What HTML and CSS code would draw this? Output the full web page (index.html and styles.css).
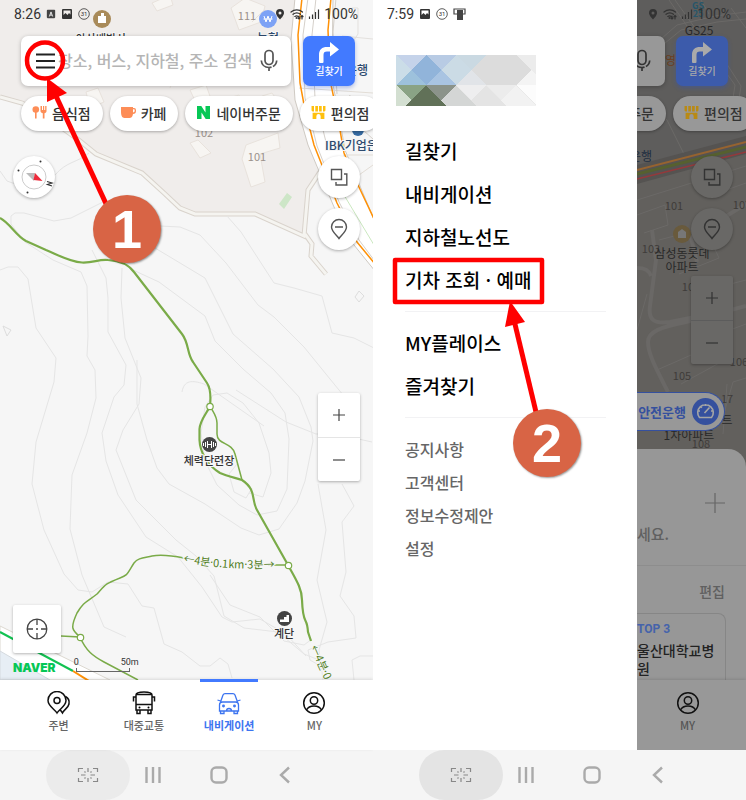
FILE: index.html
```html
<!DOCTYPE html>
<html lang="ko">
<head>
  <meta charset="UTF-8" />
  <meta name="viewport" content="width=device-width, initial-scale=1.0"/>
  <title>네이버 지도 - 기차 조회 · 예매</title>
  <link rel="stylesheet" href="styles.css">
</head>
<body>

  <!-- Shared icons -->
  <svg class="icon-defs" aria-hidden="true">
    <symbol id="i-image" viewBox="0 0 12 12"><path fill="currentColor" fill-rule="evenodd" d="M2 1h8a1 1 0 0 1 1 1v8a1 1 0 0 1-1 1H2a1 1 0 0 1-1-1V2a1 1 0 0 1 1-1zM2.500 2.500h7v4L8 5 6.500 7 4.500 5 2.500 7z"/></symbol>
    <symbol id="i-day" viewBox="0 0 12 12"><circle cx="6" cy="6" r="5.300" fill="none" stroke="currentColor" stroke-width=".8"/><text x="6" y="8.200" font-size="6" text-anchor="middle" fill="currentColor" font-family="Roboto">31</text></symbol>
    <symbol id="i-pin" viewBox="0 0 12 12"><path fill="currentColor" fill-rule="evenodd" d="M6 1a4 4 0 0 1 4 4c0 2.500-4 6.500-4 6.500S2 7.500 2 5a4 4 0 0 1 4-4zM6 3.500a1.500 1.500 0 1 0 0 3 1.500 1.500 0 0 0 0-3z"/></symbol>
    <symbol id="i-wifi" viewBox="0 0 14 12"><g fill="none" stroke="currentColor" stroke-width="1.200" stroke-linecap="round"><path d="M1 4a9 9 0 0 1 11.500 0M3 6.300a6 6 0 0 1 7.500 0M4.800 8.400a3.400 3.400 0 0 1 3.500 0M9 8v3M8 10l1 1 1-1M12 11V7.500M11 8.500l1-1 1 1"/><circle cx="6.500" cy="10" r=".4"/></g></symbol>
    <symbol id="i-signal" viewBox="0 0 12 12"><path d="M1.500 11V8.500M4.500 11V6.500M7.500 11V4M10.500 11V1.500" fill="none" stroke="currentColor" stroke-width="1.200"/></symbol>
    <symbol id="i-mic" viewBox="0 0 18 24"><g fill="none" stroke="currentColor" stroke-width="1.700"><rect x="5" y="1.500" width="8" height="14" rx="4"/><path d="M1.300 11.500c.3 4 3.200 7 7.700 7s7.400-3 7.700-7M9 18.500V22" stroke-dasharray="14 1.500 20"/></g></symbol>
    <symbol id="i-turn" viewBox="0 0 24 22"><path fill="currentColor" d="M2 20v-7C2 7.500 5 5 10 5h3V0l9 7.500L13 14.500V9.500h-3C7.500 9.500 6.500 10.500 6.500 13v7a1 1 0 0 1-1 1H3a1 1 0 0 1-1-1z"/></symbol>
    <symbol id="i-store" viewBox="0 0 14 14"><path fill="currentColor" d="M.5 1h2.300v5H1.500a1 1 0 0 1-1-1zM4 1h2.500v5H4zM7.500 1H10v5H7.500zM11.200 1h2.300v4a1 1 0 0 1-1 1h-1.300zM1.500 7.200h11V13H9v-2.500a2 2 0 0 0-4 0V13H1.500z"/></symbol>
    <symbol id="i-layers" viewBox="0 0 20 20"><g fill="none" stroke="currentColor" stroke-width="1.400"><path d="M2.500 2.500h10v10h-10zM15 7h2.800v11H7v-3"/></g></symbol>
    <symbol id="i-place" viewBox="0 0 20 22"><g fill="none" stroke="currentColor" stroke-width="1.400"><path d="M10 20.500C8 17.500 2.500 13.500 2.500 9a7.500 7.500 0 0 1 15 0c0 4.500-5.500 8.500-7.500 11.500zM6 9h8"/></g></symbol>
    <symbol id="i-plus" viewBox="0 0 14 14"><path d="M7 1v12M1 7h12" fill="none" stroke="currentColor" stroke-width="1.200"/></symbol>
    <symbol id="i-minus" viewBox="0 0 14 14"><path d="M1 7h12" fill="none" stroke="currentColor" stroke-width="1.200"/></symbol>
    <symbol id="i-my" viewBox="0 0 24 24"><g fill="none" stroke="currentColor" stroke-width="1.500"><circle cx="12" cy="12" r="10.300"/><circle cx="12" cy="9.500" r="3.700"/><path d="M4.500 19c1.500-3 4.500-4 7.500-4s6 1 7.500 4"/></g></symbol>
    <symbol id="i-capture" viewBox="0 0 22 16"><g fill="none" stroke="currentColor" stroke-width="1.200"><path d="M1.500 5V1.500H6M1.500 11v3.500H6M16 1.500h4.500V5M16 14.500h4.500V11M11 1v4M11 11v4M4 8h4.500M13.500 8H18M7.500 4.500l1 1M14.500 4.500l-1 1M7.500 11.500l1-1M14.500 11.500l-1-1"/></g></symbol>
    <symbol id="i-recent" viewBox="0 0 18 18"><path d="M2.500 1v16M9 1v16M15.500 1v16" fill="none" stroke="currentColor" stroke-width="2.400"/></symbol>
    <symbol id="i-home" viewBox="0 0 18 18"><rect x="1.500" y="1.500" width="15" height="15" rx="4.500" fill="none" stroke="currentColor" stroke-width="2.400"/></symbol>
    <symbol id="i-back" viewBox="0 0 18 18"><path d="M13 1.500L5 9l8 7.500" fill="none" stroke="currentColor" stroke-width="2.400"/></symbol>
  </svg>

  <main class="phones">

    <!-- Phone 1: map -->
    <section class="phone">
      <div class="screen">
        <svg class="map" viewBox="0 0 373 680" preserveAspectRatio="xMinYMin slice">
          <rect width="373" height="680" fill="#f6f6f6"/>
          <path fill="#f0edeb" d="M0 0H302L298 40 301 100 309 140 318 172 308 190 305 234 258 214H195L180 208 165 195 142 173 95 155 72 135 40 112 22 103 0 98z"/>
          <g fill="#f7f5f2" stroke="#e8e2dc">
            <path d="M152 3l18-8 3 10-16 6zM231 8l14-10 20 8-4 16-22 8zM86 92l12-4 6 14-14 6zM190 90l16-5 5 14-14 6zM222 100l17-5 10 24-16 6zM262 96l10-3 12 17-10 5zM190 143l8-3 13 13-11 5zM246 145l32-12 2 15-20 6 5 28-14 5-9-28z"/>
            <path fill="none" d="M252 22l12-12 20 8M170 88c6-18 10-20 22-14M210 84l6-18"/>
          </g>
          <path d="M279 204l8-11 5 4-8 12z" fill="#cde6c7"/>
          <!-- small roads -->
          <path d="M0 97l22 6 18 9 40 29 16 13 46 19 22 20 16 15 15 6h60l49 22 4-46 12-18M305 234l7 10-1 12 15 18" fill="none" stroke="#d9d3cc" stroke-width="5"/>
          <path d="M0 97l22 6 18 9 40 29 16 13 46 19 22 20 16 15 15 6h60l49 22 4-46 12-18M305 234l7 10-1 12 15 18" fill="none" stroke="#f5f4f0" stroke-width="3"/>
          <path d="M0 171l7 10 14 5M55 175c12-14 22-12 34-22" fill="none" stroke="#e3e3e3"/>
          <!-- main road -->
          <path fill="#fff" stroke="#cfcac3" d="M295-2L291 40l4 60 13 45 26 62 20 38 21 26V222L345 150l-7-40-6-30 1-82z"/>
          <path d="M373 155h-30M373 165l-14 10M299 88l74 5" stroke="#e2ddd6" fill="none"/>
          <path d="M308-2l-5 37 2 63 12 48 22 56 20 38 15 20M316-2l-4 37 3 63 11 44M336-2l-3 34 4 62M350 95l-6 18 29 26" fill="none" stroke="#d5d0ca"/>
          <path d="M302-2l-4 37 2 48 5 27 9 35 23 58 20 39 18 22M331-2l-3 32 2 50 7 33 7 40 14 32 18 38" fill="none" stroke="#ff9106" stroke-width="1.500"/>
          <path d="M344 195l30 50" stroke="#cbe8c0" fill="none"/>
          <path d="M352 8l6 0v26l-8 12M342 36l31 3" fill="none" stroke="#e3e0dd"/>
          <!-- contour lines -->
          <g fill="none" stroke="#e5e5e5">
            <path d="M103 202l-32 16-17 3-30-8h-9l-4 3v8l14 18 28 18 28 12 6 14 1 50-1 20 8 14 1 28-9 35-15 42-2 54 12 46 22 52 22 10"/>
            <path d="M0 270l8-3h10l10 12 8 49 20 30-2 24-18 60-4 42 12 46 20 44 14 16 14 2 16-10 20 2 14 22 12 2 10 36 18 8 18 14h10l10-8 8 6 4 14"/>
            <path d="M92 250l4 8 10 20 2 20v34l18 33-2 20-10 12-12 36 4 28 12 34 28 42 32 20 24 30 20 30 10 5 28-3 26 15 20 22"/>
            <path d="M122 268l-1 30 4 40 16 40-2 26-16 26-7 20 20 50 40 40 20 16 18 20 10 40 20 12 34 4 26 22 20 8"/>
            <path d="M133 270l26 12 46 34 10 25 28 28 28 24 14 20 4 26-2 50-10 22-20 4-18-10-22-20-12-24-4-28 4-26 8-12 14-2 16 10 16 20 10 30 2 20-8 24-14-4"/>
            <path d="M160 226l20 1 20 8 26 28 32 42 16 12 30 30 26 32 18 22 4 40"/>
            <path d="M155 248l50 30 28 56 40 35 26 28 12 30 2 14-8 40-8 22-18 26-20 6-18-7-36-24-36-20-12-16-10-28-10-36V360"/>
            <path d="M227 216l14 16 33 51 20 5 28 8 10 37 22 5 20 10"/>
            <path d="M182 392c2-12 10-12 22-8l60 42M236 390l50 32 30 12h20l36 8M237 464l-8 10 5 18 12 6 6-10"/>
            <path d="M318 484l8 46-9 50 10 42-8 28 4 30M342 484l12 22-12 16 4 50-6 24 14 20 2 22-28 4-20 8 2 10 7 4M210 575l20 30 30 12 24 24 20 4 8-6M354 680l-2-20 8-4h14"/>
          </g>
          <path d="M355 297l4-6 5 5-5 6zM3 326l8 4-4 6z" fill="none" stroke="#ddd"/>
          <!-- road bottom left -->
          <path d="M0 626l110 54H0z" fill="#fff" stroke="#dcd8d0"/>
          <path d="M0 651l50 29H0z" fill="#e7eef5" stroke="#d5dadf"/>
          <path d="M0 632l73 39" stroke="#12c252" stroke-width="2"/>
          <path d="M73 671l16 10" stroke="#ff9106" stroke-width="2"/>
          <!-- trails -->
          <g fill="none" stroke="#7aab48" stroke-linejoin="round">
            <path stroke-width="2.200" d="M0 218C10 223 16 236 26 241L46 250C58 255 70 262 82 262.500S98 259 108 260C122 261 129 265 134 272L182 334C189 343 187 354 193 362L207 383C211 389 211 396 210 406 207 413 200 420 199.500 429V440C200 452 207 465 220 473 227 476 236 478 242 480 257 490 251 500 257 510L288 565C295 578 302 588 302 600 303 627 307 615 308 632L311 641"/>
            <path stroke-width="1.500" d="M210 406C213 412 217 416 217 423V434C217 445 232 442 235 454L242 480M184 558C174 556 162 554 152 556 143 558 138 558 134 563 127 574 128 575 120 578 105 584 106 584 97 594 87 602 84 601 77 613 70 628 72 630 80 637 86 651 93 656 104 662L138 680M61 636l19 1M268 565h20"/>
          </g>
          <g fill="#fff" stroke="#7aab48" stroke-width="1.200">
            <circle cx="210" cy="406.500" r="3.200"/><circle cx="288.500" cy="565.500" r="3.200"/><circle cx="80.500" cy="637.500" r="3.200"/>
          </g>
          <path id="trailLabel" d="M183 562C205 566 225 570 280 568" fill="none"/>
          <text class="trail-text"><textPath href="#trailLabel">←4분·0.1km·3분→</textPath></text>
          <text class="trail-text" transform="translate(310 647) rotate(66)">←4분·0.1</text>
          <!-- places -->
          <circle cx="209.500" cy="444.500" r="7.500" fill="#444"/>
          <path d="M207.500 441v7M211.500 441v7M207.500 444.500h4M205.500 442v5M213.500 442v5M203.500 443v3M215.500 443v3" stroke="#fff" fill="none"/>
          <text class="map-label" x="209" y="465">체력단련장</text>
          <circle cx="284.500" cy="618.500" r="7.500" fill="#444"/>
          <path d="M280 622h9v-7h-2.500v2H284v2.500h-4z" fill="#fff"/>
          <text class="map-label" x="284" y="638">계단</text>
          <circle cx="102" cy="19" r="9" fill="#a98b5a"/>
          <path d="M98 23v-7h3v-3h3v3h2v7z" fill="#fff"/>
          <text class="map-label" x="101" y="43">아산배방사</text>
          <circle cx="268" cy="19" r="9" fill="#7da2f5"/>
          <path d="M264 16l2 6 2-6 2 6 2-6M263.500 19h9" stroke="#fff" fill="none"/>
          <text class="map-label bank" x="268" y="43">농협</text>
          <text class="map-label bank" x="357" y="75">은행</text>
          <circle cx="358" cy="130" r="6" fill="#376ca3"/>
          <text class="map-label bank start" x="325" y="150">IBK기업은</text>
          <text class="map-num" x="247" y="20">111</text>
          <text class="map-num" x="204" y="137">102</text>
          <text class="map-num" x="257" y="161">101</text>
        </svg>

        <div class="status">
          <span class="clock">8:26</span>
          <svg width="10" height="10" viewBox="0 0 12 12"><rect x="1" y="1" width="10" height="10" rx="1" fill="#444"/><path d="M4 9l2-5.500L8 9M4.800 7.300h2.400" stroke="#fff" fill="none"/></svg>
          <svg width="12" height="12"><use href="#i-image"/></svg>
          <svg width="12" height="12"><use href="#i-day"/></svg>
          <span class="status-right">
            <svg width="12" height="12"><use href="#i-pin"/></svg>
            <svg width="14" height="12"><use href="#i-wifi"/></svg>
            <svg width="12" height="12"><use href="#i-signal"/></svg>
            <span>100%</span>
          </span>
        </div>

        <div class="top-row">
          <form class="search">
            <button type="button" class="plain" aria-label="메뉴">
              <svg width="20" height="16" viewBox="0 0 20 16"><path d="M0 1.500h19M0 8h19M0 14.500h19" stroke="#222" stroke-width="1.800"/></svg>
            </button>
            <input type="text" class="search-input" placeholder="장소, 버스, 지하철, 주소 검색" aria-label="검색">
            <button type="button" class="plain mic" aria-label="음성 검색"><svg width="18" height="24"><use href="#i-mic"/></svg></button>
          </form>
          <button class="route"><svg width="24" height="22"><use href="#i-turn"/></svg>길찾기</button>
        </div>

        <div class="chips">
          <button class="chip"><svg width="15" height="15" viewBox="0 0 15 15"><g fill="#fd8d57"><circle cx="3.800" cy="4.500" r="3.300"/><path d="M3 6h1.600v7.500H3zM8.500 1H10v4h1V1h1.200v4h1V1h1.300v5c0 1.500-1 2-2 2.300v5.200h-1.700V8.300c-1-.3-2.300-.8-2.300-2.300z"/></g></svg>음식점</button>
          <button class="chip"><svg width="15" height="15" viewBox="0 0 15 15"><path fill="#fd8d57" fill-rule="evenodd" d="M0 2h12v1h1a2 2 0 0 1 2 2v1a3 3 0 0 1-3 3c-.5 3-2 4-3.500 4h-5C1 13 0 10 0 7zM12 4.300v3.200c1 0 1.700-.7 1.700-1.700V5a.7.7 0 0 0-.7-.7z"/></svg>카페</button>
          <button class="chip"><svg width="15" height="15" viewBox="0 0 15 15"><path fill="#06c755" d="M1 1h4.300l4.200 6.500V1H14v13H9.700L5.500 7.500V14H1z"/></svg>네이버주문</button>
          <button class="chip store"><svg width="15" height="15"><use href="#i-store"/></svg>편의점</button>
        </div>

        <div class="map-tools">
          <button class="compass" aria-label="나침반">
            <svg width="42" height="42" viewBox="0 0 42 42">
              <circle cx="21" cy="21" r="12" fill="none" stroke="#ccc"/>
              <path d="M13 17l9 0-1 8z" fill="#bbb"/><path d="M22 17l7.500 8-9-1z" fill="#ee2b3b"/>
              <g fill="#333"><circle cx="27.500" cy="5.500" r="1"/><circle cx="5.500" cy="14.500" r="1"/><circle cx="14.500" cy="36.500" r="1"/></g>
              <path d="M34 25.500l5 1.500-4.500 1.500 4.500 1.500" stroke="#333" stroke-width="1.200" fill="none"/>
            </svg>
          </button>
          <div class="side">
            <button class="round" aria-label="지도 유형"><svg width="20" height="20"><use href="#i-layers"/></svg></button>
            <button class="round" aria-label="장소"><svg width="20" height="22"><use href="#i-place"/></svg></button>
            <div class="zoom">
              <button aria-label="확대"><svg width="14" height="14"><use href="#i-plus"/></svg></button>
              <button aria-label="축소"><svg width="14" height="14"><use href="#i-minus"/></svg></button>
            </div>
          </div>
        </div>

        <div class="map-bottom">
          <button class="locate" aria-label="현재 위치">
            <svg width="22" height="22" viewBox="0 0 22 22"><g fill="none" stroke="#444" stroke-width="1.300"><circle cx="11" cy="11" r="9.800"/><path d="M11 1v6M11 15v6M1 11h6M15 11h6"/></g><circle cx="11" cy="11" r="1" fill="#444"/></svg>
          </button>
          <div class="legend">
            <span class="brand">NAVER</span>
            <div class="scale"><span>0</span><span>50m</span></div>
          </div>
        </div>
      </div>

      <nav class="tabs">
        <a href="#" class="tab"><svg width="24" height="24" viewBox="0 0 24 24"><g fill="none" stroke="#111" stroke-width="1.500"><path d="M10 22C8 18.500 1 15 1 9.500a9 9 0 0 1 18 0C19 15 12 18.500 10 22z"/><circle cx="10" cy="9.500" r="3"/><path d="M18.500 5.500c3 1.500 4 4.500 3.500 7.500-.8 4-5 5.500-6.500 9l-2.500-3.500"/></g></svg>주변</a>
        <a href="#" class="tab"><svg width="24" height="24" viewBox="0 0 24 24"><g fill="none" stroke="#111" stroke-width="1.500"><path d="M4 19V4c0-2 3-3 8-3s8 1 8 3v15zM4 3.500h16M4 13.500h16M4 6H1.500v4.500M20 6h2.500v4.500M5 19v3.500h3V19M16 19v3.500h3V19"/></g><circle cx="7.500" cy="16.500" r="1"/><circle cx="16.500" cy="16.500" r="1"/></svg>대중교통</a>
        <a href="#" class="tab active"><svg width="24" height="24" viewBox="0 0 24 24"><g fill="none" stroke="#3c74f0" stroke-width="1.300"><path d="M3.500 11L6 4c.5-1 1-1.300 2-1.300h8c1 0 1.500.3 2 1.300l2.500 7M2.500 20v-6c0-2 1-3 3-3h13c2 0 3 1 3 3v6zM3.500 10L.5 9M20.500 10l3-1M3.500 20v2.500h3.500V20M17 20v2.500h3.500V20M9.500 20c0-2 .5-2.500 2.500-2.500s2.500.5 2.500 2.500"/><circle cx="6.500" cy="15" r=".8"/><circle cx="17.500" cy="15" r=".8"/></g></svg>내비게이션</a>
        <a href="#" class="tab"><svg class="my" width="24" height="24"><use href="#i-my"/></svg>MY</a>
      </nav>

      <div class="sysnav">
        <button class="pill" aria-label="캡처"><svg width="22" height="16"><use href="#i-capture"/></svg></button>
        <div class="sysnav-keys">
          <button aria-label="최근 앱"><svg width="18" height="18"><use href="#i-recent"/></svg></button>
          <button aria-label="홈"><svg width="18" height="18"><use href="#i-home"/></svg></button>
          <button aria-label="뒤로"><svg width="18" height="18"><use href="#i-back"/></svg></button>
        </div>
      </div>

      <!-- Step 1 -->
      <svg class="marks" width="373" height="680">
        <circle cx="45" cy="60.500" r="18" fill="none" stroke="#f00" stroke-width="4.500"/>
        <path d="M56 96l52 112" stroke="#f00" stroke-width="5"/>
        <path d="M47 78l20 15-20 9z" fill="#f00"/>
      </svg>
      <span class="step step-one">1</span>
    </section>

    <!-- Phone 2: open menu -->
    <section class="phone">
      <div class="screen split">
        <aside class="drawer">
          <svg class="profile" width="140" height="51" viewBox="0 0 140 51" shape-rendering="crispEdges">
            <rect width="140" height="51" fill="#e9e9e9"/>
            <path d="M0 0h30L15 15z" fill="#c5d3ea"/><path d="M0 0l15 15L0 30z" fill="#cbdde8"/>
            <path d="M15 15l15 15H0z" fill="#9dc1dc"/>
            <path d="M15 15L30 0l15 15-15 15z" fill="#91b4da"/><path d="M30 30l15-15 15 15z" fill="#a9c4e2"/>
            <path d="M30 0h30L45 15z" fill="#b8cbe4"/><path d="M60 0l15 15-15 15-15-15z" fill="#cbdbe5"/>
            <path d="M60 0h30L75 15z" fill="#cad9e2"/><path d="M60 30l15-15 15 15z" fill="#e1e4e8"/>
            <path d="M90 0h30l15 15-15 15H90L75 15z" fill="#dcdcdc"/><path d="M120 0h20v20z" fill="#ececec"/><path d="M120 30l15-15 5 5v10z" fill="#f4f4f4"/>
            <path d="M0 30h30L15 45z" fill="#8aa385"/><path d="M0 30l15 15-6 6H0z" fill="#d3dfd1"/>
            <path d="M30 30h30L45 46z" fill="#8b938a"/><path d="M30 30l20 21H10z" fill="#617158"/>
            <path d="M60 30l20 21H50l-5-6z" fill="#d4d6d5"/><path d="M60 30h30L75 45z" fill="#eeeeef"/>
            <path d="M90 30l20 21H80l-5-6z" fill="#e4e4e4"/><path d="M90 30h30l-15 15z" fill="#ececec"/><path d="M120 30l20 21h-30l-5-6z" fill="#f2f2f2"/><path d="M120 30h20v20z" fill="#fcfcfc"/>
          </svg>
          <ul class="menu">
            <li><a href="#">길찾기</a></li>
            <li><a href="#">내비게이션</a></li>
            <li><a href="#">지하철노선도</a></li>
            <li><a href="#">기차 조회 · 예매</a></li>
          </ul>
          <ul class="menu">
            <li><a href="#">MY플레이스</a></li>
            <li><a href="#">즐겨찾기</a></li>
          </ul>
          <ul class="menu small">
            <li><a href="#">공지사항</a></li>
            <li><a href="#">고객센터</a></li>
            <li><a href="#">정보수정제안</a></li>
            <li><a href="#">설정</a></li>
          </ul>
        </aside>

        <div class="behind">
          <svg class="map" viewBox="0 0 109 680" preserveAspectRatio="xMinYMin slice">
            <rect width="109" height="680" fill="#62605d"/>
            <path d="M0 0h109v144L0 176z" fill="#5e5d5c"/>
            <g fill="none" stroke="#6b6967">
              <path d="M0 60l40-35 38-9 31-4M0 66l44-36 36-8 29-3M38 0l20 28M32 0l18 26M80 60l18 25-6 40M86 58l18 28-6 40M64 0l8 14M0 96l30 24 20 40M94 8l15 20"/>
              <path stroke-width="4" stroke="#6a6866" d="M0 268c8 0 12 2 14 8M15 230l4 30-6 46c-2 14 4 18 20 16l40-8M109 306l-60 16c-26 5-38 10-38 20 0 12 8 26 20 50M60 262l-6-24 55-34"/>
              <path d="M0 200l109-34M0 215l28-10 3 20-24 8M75 195l34-12M22 240l46-12 14 30-40 16M20 370l50-22 14 14-40 22M66 340l43-16M84 424l12-42 13-4M90 384l-4 50M0 330l10-36M70 290l39-10"/>
            </g>
            <path d="M0 165l109-29v18L0 184z" fill="#555351"/>
            <path d="M0 170l109-28" stroke="#966330" stroke-width="2"/>
            <path d="M0 174l109-27" stroke="#56602f" stroke-width="3"/>
            <path d="M0 179l109-27" stroke="#94393b" stroke-width="1.500"/>
            <g class="dim-labels">
              <text x="61" y="9" class="gs">GS</text><text x="61" y="17" class="gs">25</text>
              <text x="62" y="35">GS25</text>
              <text x="28" y="65" class="orange">미영</text>
              <text x="4" y="161" class="blue">은행</text>
              <text x="37" y="210" class="num">101</text><text x="105" y="209" class="num">107</text>
              <text x="14" y="253" class="num">103</text><text x="54" y="291" class="num">102</text>
              <text x="102" y="366" class="num">106</text><text x="45" y="380" class="num">105</text>
              <text x="90" y="403" class="num">17</text><text x="64" y="448" class="num">108</text>
              <circle cx="45" cy="234" r="9" fill="#695a3c"/>
              <path d="M41 238v-6l4-3 4 3v6z" fill="#777"/>
              <text x="45" y="258">삼성동롯데</text><text x="45" y="272">아파트</text>
              <text x="52" y="440">1차아파트</text><text x="90" y="425">트</text>
            </g>
          </svg>

          <div class="top-row">
            <div class="search"><svg width="18" height="24"><use href="#i-mic"/></svg></div>
            <button class="route"><svg width="24" height="22"><use href="#i-turn"/></svg>길찾기</button>
          </div>
          <div class="chips">
            <button class="chip cut">주문</button>
            <button class="chip store"><svg width="15" height="15"><use href="#i-store"/></svg>편의점</button>
          </div>
          <div class="side">
            <button class="round" aria-label="지도 유형"><svg width="20" height="20"><use href="#i-layers"/></svg></button>
            <button class="round" aria-label="장소"><svg width="20" height="22"><use href="#i-place"/></svg></button>
            <div class="zoom">
              <button aria-label="확대"><svg width="14" height="14"><use href="#i-plus"/></svg></button>
              <button aria-label="축소"><svg width="14" height="14"><use href="#i-minus"/></svg></button>
            </div>
          </div>
          <button class="safe-drive">안전운행
            <svg width="27" height="27" viewBox="0 0 27 27"><circle cx="13.500" cy="13.500" r="13.500" fill="#35509e"/><g fill="none" stroke="#a5a5a5" stroke-width="1.600"><path d="M7.500 19.500a7.800 7.800 0 1 1 12 0zM12.500 15l5-5.500M13.500 6v2M6 13h2M19 13h2M8.500 8.500l1.300 1.300"/></g></svg>
          </button>
          <div class="sheet">
            <div class="sheet-head">
              <button class="plain" aria-label="추가"><svg width="20" height="20" viewBox="0 0 20 20"><path d="M10 0v20M0 10h20" stroke="#666" stroke-width="1.200"/></svg></button>
              <p>세요.</p>
            </div>
            <a href="#" class="edit">편집</a>
            <div class="card"><b>TOP 3</b><p>울산대학교병원</p></div>
          </div>
          <nav class="tabs"><a href="#" class="tab"><svg class="my" width="24" height="24"><use href="#i-my"/></svg>MY</a></nav>
        </div>

        <div class="status">
          <span class="clock">7:59</span>
          <svg width="12" height="12"><use href="#i-image"/></svg>
          <svg width="12" height="12"><use href="#i-day"/></svg>
          <svg width="13" height="12" viewBox="0 0 13 12"><path d="M1 1h11v5H1z" fill="none" stroke="#444" stroke-width="1.200"/><path d="M4 2h6v10H4z" fill="#444"/></svg>
          <span class="status-right">
            <svg width="12" height="12"><use href="#i-pin"/></svg>
            <svg width="14" height="12"><use href="#i-wifi"/></svg>
            <svg width="12" height="12"><use href="#i-signal"/></svg>
            <span>100%</span>
          </span>
        </div>
      </div>

      <div class="sysnav">
        <button class="pill dark" aria-label="캡처"><svg width="22" height="16"><use href="#i-capture"/></svg></button>
        <div class="sysnav-keys">
          <button aria-label="최근 앱"><svg width="18" height="18"><use href="#i-recent"/></svg></button>
          <button aria-label="홈"><svg width="18" height="18"><use href="#i-home"/></svg></button>
          <button aria-label="뒤로"><svg width="18" height="18"><use href="#i-back"/></svg></button>
        </div>
      </div>

      <!-- Step 2 -->
      <svg class="marks" width="373" height="680">
        <rect x="22" y="260" width="147" height="42" fill="none" stroke="#f00" stroke-width="4.500" stroke-linejoin="round"/>
        <path d="M141 320l22 92" stroke="#f00" stroke-width="5"/>
        <path d="M137 301l15 21-20 5z" fill="#f00"/>
      </svg>
      <span class="step step-two">2</span>
    </section>

  </main>
</body>
</html>
```
FILE: styles.css
```css
* {
  box-sizing: border-box;
}
body {
  margin: 0;
  font-family: "Noto Sans CJK KR", sans-serif;
  color: #222;
  background: #fff;
}
button {
  padding: 0;
  border: none;
  background: none;
  font-family: inherit;
  color: inherit;
  cursor: pointer;
}
a {
  color: inherit;
  text-decoration: none;
}
p {
  margin: 0;
}
svg {
  display: block;
  flex-shrink: 0;
}
.icon-defs {
  position: absolute;
  width: 0;
  height: 0;
}

/* phones */
.phones {
  display: grid;
  grid-template-columns: 1fr 1fr;
  min-height: 100vh;
}
.phone {
  position: relative;
  display: flex;
  flex-direction: column;
  min-width: 0;
  overflow: hidden;
}
.screen {
  position: relative;
  z-index: 0;
  flex: 1;
  display: flex;
  flex-direction: column;
  padding-top: 36px;
}
.map {
  position: absolute;
  top: 0;
  left: 0;
  z-index: -1;
  width: 100%;
}
.map-label {
  font-size: 11px;
  font-weight: 500;
  text-anchor: middle;
  fill: #333;
  stroke: #f6f6f6;
  stroke-width: 2px;
  paint-order: stroke;
}
.map-label.bank {
  font-size: 12px;
  fill: #2d4a6e;
}
.map-label.start {
  text-anchor: start;
}
.map-num {
  font-size: 11px;
  text-anchor: middle;
  fill: #9b918b;
}
.trail-text {
  font-size: 11px;
  fill: #4f7d22;
  stroke: #f6f6f6;
  stroke-width: 2px;
  paint-order: stroke;
}

/* status bar */
.status {
  position: absolute;
  top: 0;
  left: 0;
  right: 0;
  height: 28px;
  display: flex;
  align-items: center;
  gap: 5px;
  padding: 0 15px 0 14px;
  font-family: Roboto, sans-serif;
  font-size: 14px;
  color: #333;
}
.status-right {
  margin-left: auto;
  display: flex;
  align-items: center;
  gap: 4px;
}

/* search and categories */
.top-row {
  display: flex;
  gap: 12px;
  padding: 0 18px 0 21px;
}
.search {
  flex: 1;
  min-width: 0;
  height: 50px;
  display: flex;
  align-items: center;
  padding: 0 13px 0 15px;
  border-radius: 7px;
  background: #fff;
  box-shadow: 0 1px 4px rgba(0, 0, 0, .25);
}
.search-input {
  flex: 1;
  min-width: 0;
  padding: 0 0 2px 2px;
  border: none;
  outline: none;
  background: none;
  font-family: inherit;
  font-size: 16px;
  font-weight: 500;
}
.search-input::placeholder {
  color: #b5b5b5;
}
.mic {
  color: #555;
}
.route {
  width: 52px;
  height: 50px;
  display: flex;
  flex-direction: column;
  align-items: center;
  justify-content: center;
  padding-bottom: 2px;
  border-radius: 7px;
  background: #427aff;
  box-shadow: 0 2px 4px rgba(40, 80, 200, .35);
  color: #fff;
  font-size: 10px;
  font-weight: 500;
  line-height: 14px;
}
.chips {
  display: flex;
  gap: 7px;
  padding: 10px 0 5px 21px;
  overflow: hidden;
}
.chip {
  flex-shrink: 0;
  height: 35px;
  display: flex;
  align-items: center;
  gap: 5px;
  padding: 0 12px 2px 11px;
  border-radius: 18px;
  background: #fff;
  box-shadow: 0 1px 3px rgba(0, 0, 0, .3);
  color: #333;
  font-size: 14px;
  font-weight: 500;
  white-space: nowrap;
}
.store svg {
  color: #ffc00d;
}

/* map buttons */
.map-tools {
  flex: 1;
  display: flex;
  justify-content: space-between;
  align-items: flex-start;
  padding: 20px 13px 124px;
}
.compass,
.round {
  width: 42px;
  height: 42px;
  display: flex;
  align-items: center;
  justify-content: center;
  border-radius: 50%;
  background: #fff;
  box-shadow: 0 1px 3px rgba(0, 0, 0, .3);
  color: #555;
}
.side {
  align-self: stretch;
  display: flex;
  flex-direction: column;
  align-items: flex-end;
  gap: 10px;
}
.zoom {
  margin-top: auto;
  width: 42px;
  border-radius: 2px;
  background: #fff;
  box-shadow: 0 1px 3px rgba(0, 0, 0, .3);
  color: #444;
}
.zoom button {
  width: 100%;
  height: 44px;
  display: flex;
  align-items: center;
  justify-content: center;
}
.zoom button + button {
  border-top: 1px solid #e5e5e5;
}
.map-bottom {
  padding: 0 13px 5px;
}
.locate {
  width: 48px;
  height: 48px;
  display: flex;
  align-items: center;
  justify-content: center;
  border-radius: 2px;
  background: #fff;
  box-shadow: 0 1px 3px rgba(0, 0, 0, .3);
}
.legend {
  display: flex;
  align-items: flex-end;
  gap: 20px;
  height: 22px;
}
.brand {
  font-family: Inter, sans-serif;
  font-size: 12px;
  font-weight: 900;
  line-height: 15px;
  color: #06c755;
}
.scale {
  width: 54px;
  display: flex;
  justify-content: space-between;
  margin-bottom: 3px;
  border: 1px solid #666;
  border-top: none;
  height: 4px;
  font-family: Roboto, sans-serif;
  font-size: 9px;
  line-height: 1px;
  color: #333;
}
.scale span {
  margin: -6px -10px 0 -3px;
}

/* bottom tabs */
.tabs {
  position: relative;
  z-index: 1;
  height: 70px;
  display: flex;
  padding: 0 16px;
  background: #fff;
  box-shadow: 0 -1px 3px rgba(0, 0, 0, .12);
}
.tab {
  flex: 1;
  display: flex;
  flex-direction: column;
  align-items: center;
  gap: 2px;
  padding-top: 11px;
  font-size: 11px;
  font-weight: 500;
  line-height: 16px;
  color: #666;
}
.tab.active {
  color: #3c74f0;
  font-weight: 700;
}
.tab.active::before {
  content: "";
  position: absolute;
  top: -1px;
  width: 58px;
  height: 3px;
  background: #427aff;
}
.my {
  color: #111;
}

/* android keys */
.sysnav {
  height: 50px;
  display: flex;
  padding-left: 46px;
  background: #f5f5f5;
  color: #aaa;
}
.pill {
  width: 84px;
  display: flex;
  align-items: center;
  justify-content: center;
  border-radius: 25px;
  background: #ebebeb;
  color: #888;
}
.pill.dark {
  background: #e4e4e4;
}
.sysnav-keys {
  display: flex;
  gap: 20px;
}
.sysnav-keys button {
  width: 46px;
  display: flex;
  align-items: center;
  justify-content: center;
}

/* drawer */
.split {
  flex-direction: row;
  padding-top: 0;
}
.drawer {
  width: 264px;
  padding: 55px 31px 0 32px;
  background: #fff;
}
.profile {
  margin: 0 0 23px -9px;
}
.menu {
  margin: 0;
  padding: 0 0 10px;
  list-style: none;
  font-size: 19px;
  font-weight: 500;
  line-height: 43px;
  color: #000;
}
.menu + .menu {
  padding-top: 9px;
  border-top: 1px solid #f2f2f4;
}
.menu.small {
  padding-top: 15px;
  font-size: 16px;
  line-height: 33px;
  color: #666;
}

/* dimmed app behind the drawer */
.behind {
  position: relative;
  z-index: 0;
  flex: 1;
  min-width: 0;
  display: flex;
  flex-direction: column;
  padding-top: 36px;
  overflow: hidden;
}
.dim-labels {
  font-size: 12px;
  text-anchor: middle;
  fill: #282828;
}
.dim-labels .num {
  font-size: 11px;
  fill: #3f3c3a;
}
.dim-labels .gs {
  font-size: 9px;
  font-weight: 700;
  fill: #27566a;
}
.dim-labels .orange {
  fill: #6d3f20;
}
.dim-labels .blue {
  fill: #1f2d40;
}
.behind .top-row {
  gap: 11px;
  padding-left: 0;
}
.behind .search {
  justify-content: flex-end;
  padding: 0 14px 0 0;
  border-radius: 0 7px 7px 0;
  background: #989898;
  color: #333;
  overflow: hidden;
}
.behind .route {
  background: #3c5bab;
  color: #aaa;
}
.behind .chips {
  padding-left: 0;
}
.behind .chip {
  background: #989898;
}
.behind .cut {
  width: 29px;
  justify-content: flex-end;
  padding-left: 0;
  border-radius: 0 18px 18px 0;
  overflow: hidden;
}
.behind .store svg {
  color: #b98a14;
}
.behind .side {
  align-self: auto;
  padding: 20px 13px 0 0;
}
.behind .round,
.behind .zoom {
  background: #696866;
  color: #333;
}
.behind .zoom {
  margin-top: 16px;
}
.behind .zoom button + button {
  border-color: #5c5c5c;
}
.safe-drive {
  width: 88px;
  height: 39px;
  display: flex;
  align-items: center;
  justify-content: flex-end;
  gap: 6px;
  margin: 28px 0 18px;
  padding-right: 5px;
  border: 1px solid #35509e;
  border-left: none;
  border-radius: 0 20px 20px 0;
  background: #989898;
  color: #35509e;
  font-size: 13px;
  font-weight: 700;
  white-space: nowrap;
}
.sheet {
  flex: 1;
  overflow: hidden;
  display: flex;
  flex-direction: column;
  border-radius: 0 18px 0 0;
  background: #979797;
  color: #606060;
}
.sheet-head {
  display: flex;
  flex-direction: column;
  height: 117px;
  padding-top: 44px;
  border-bottom: 1px solid #8d8d8d;
  font-size: 15px;
  font-weight: 500;
  line-height: 24px;
}
.sheet-head .plain {
  align-self: flex-end;
  margin: 0 21px 9px 0;
}
.edit {
  margin: 13px 21px 10px auto;
  font-size: 14px;
  font-weight: 500;
  line-height: 24px;
}
.card {
  flex: 1;
  min-height: 64px;
  margin-right: 20px;
  padding-top: 7px;
  border: 1px solid #868686;
  border-width: 1px 1px 0 0;
  border-radius: 0 8px 0 0;
  color: #222;
  font-size: 14px;
  font-weight: 500;
  line-height: 18px;
}
.card b {
  display: block;
  margin-bottom: 4px;
  font-family: Roboto, sans-serif;
  font-size: 12px;
  line-height: 16px;
  color: #4563ab;
}
.card p {
  word-break: break-all;
}
.behind .tabs {
  justify-content: flex-end;
  background: #989898;
}
.behind .tab {
  flex: 0 0 85px;
  color: #555;
}

/* step marks */
.marks {
  position: absolute;
  top: 0;
  left: 0;
  z-index: 2;
  pointer-events: none;
}
.step {
  position: absolute;
  z-index: 3;
  width: 68px;
  height: 68px;
  border-radius: 50%;
  background: #d86445;
  box-shadow: 1px 1px 2px rgba(0, 0, 0, .4);
  font-family: "Liberation Sans", sans-serif;
  font-size: 54px;
  font-weight: 700;
  line-height: 68px;
  text-align: center;
  color: #fff;
}
.step-one {
  top: 195px;
  left: 93px;
}
.step-two {
  top: 409px;
  left: 140px;
}
```
